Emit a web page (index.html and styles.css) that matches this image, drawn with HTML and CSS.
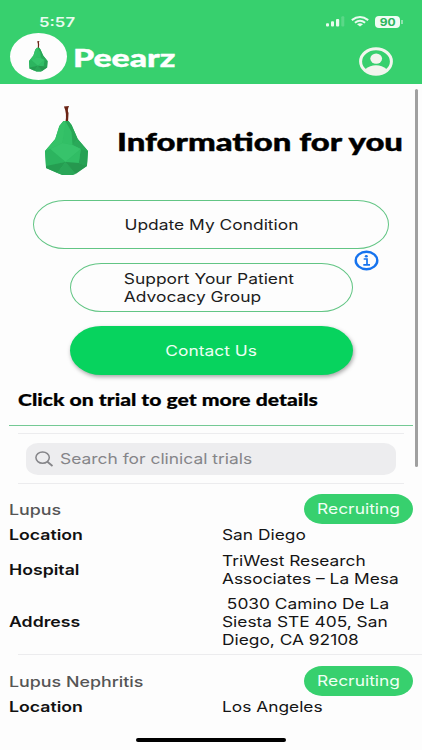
FILE: index.html
```html
<!DOCTYPE html>
<html lang="en">
<head>
<meta charset="utf-8">
<title>Peearz</title>
<link rel="stylesheet" href="styles.css">
</head>
<body>
<svg width="0" height="0" class="defs" aria-hidden="true">
  <symbol id="pear" viewBox="0 0 43 70" preserveAspectRatio="none">
    <path d="M18.5 0.5 L23.5 0 Q21.5 4 23 7 L22.5 16 L20 16 Q21.5 7 18.5 0.5Z" fill="#6b2415"/>
    <path d="M18 15 L23 15 L26 19 L32 33 L42 45 L41 60 L27 69 L17 69 L1 62 L0 45 L10 33 L14 20Z" fill="#2fb861"/>
    <path d="M20 15 L18 15 L14 20 L10 33 L0 45 L5 43 L17 37 L20 24Z" fill="#35c268"/>
    <path d="M20 15 L17 37 L27 39 L26 26Z" fill="#32bf66"/>
    <path d="M20 15 L23 15 L26 19 L32 33 L27 39 L26 26Z" fill="#27a655"/>
    <path d="M32 33 L42 45 L35 43 L27 39Z" fill="#2aa959"/>
    <path d="M17 37 L27 39 L35 43 L20 56 L5 43Z" fill="#37c36b"/>
    <path d="M0 45 L5 43 L20 56 L1 60Z" fill="#2cb45f"/>
    <path d="M35 43 L42 45 L41 60 L33 57Z" fill="#27a154"/>
    <path d="M35 43 L33 57 L20 56Z" fill="#31bd65"/>
    <path d="M1 60 L20 56 L12 67 L1 62Z" fill="#259d51"/>
    <path d="M20 56 L30 68 L27 69 L17 69 L12 67Z" fill="#2aa658"/>
    <path d="M20 56 L33 57 L41 60 L30 68Z" fill="#26984f"/>
  </symbol>
</svg>
<div class="screen">
  <header class="header">
    <div class="status">
      <span class="wide clock">5:57</span>
      <div class="status-icons">
        <svg class="signal" width="19" height="11" viewBox="0 0 19 11" fill="#e9fbef"><rect y="7.2" width="3" height="3.3" rx="1"/><rect x="5" y="5.3" width="3" height="5.2" rx="1"/><rect x="10" y="3" width="3.2" height="7.5" rx="1"/><rect x="15.3" y="0.3" width="3" height="10.2" rx="1" opacity=".2"/></svg>
        <svg class="wifi" width="18" height="11" viewBox="0 0 18 11" fill="none" stroke="#e9fbef" stroke-width="2"><path d="M.8 4.1Q9-2 17.2 4.1"/><path d="M3.9 6.7Q9 2.8 14.1 6.7"/><path d="M9 10.6 6 8.3Q9 6.2 12 8.3Z" fill="#e9fbef" stroke="none"/></svg>
        <span class="battery"><span class="wide">90</span></span><i class="battery-tip"></i>
      </div>
    </div>
    <div class="brand">
      <div class="logo"><svg width="19" height="31"><use href="#pear"/></svg></div>
      <span class="wide brand-name">Peearz</span>
      <svg class="profile" width="34" height="29" viewBox="0 0 34 29"><ellipse cx="17" cy="14.5" rx="15.4" ry="12.7" fill="none" stroke="#f2f5ee" stroke-width="3"/><ellipse cx="17.2" cy="11.6" rx="5.9" ry="5.2" fill="#f2f5ee"/><path d="M6.2 22.2Q11 18.2 17 18.2T27.8 22.2Q23 27 17 27T6.2 22.2Z" fill="#f2f5ee"/></svg>
    </div>
  </header>
  <main class="content">
    <div class="hero">
      <svg width="44" height="70"><use href="#pear"/></svg>
      <h1 class="wide hero-title">Information for you</h1>
    </div>
    <div class="actions">
      <button class="btn btn-large"><span class="wide">Update My Condition</span></button>
      <div class="support">
        <button class="btn"><span class="wide support-text">Support Your Patient<br>Advocacy Group</span></button>
        <svg class="info" width="25" height="21" viewBox="0 0 25 21"><ellipse cx="12.5" cy="10.5" rx="10.8" ry="8.7" fill="none" stroke="#1673ee" stroke-width="2.4"/><ellipse cx="12.3" cy="6.3" rx="1.5" ry="1.2" fill="#1673ee"/><path d="M9.7 9H13V14.8M9.3 14.8H16" fill="none" stroke="#1673ee" stroke-width="1.7"/></svg>
      </div>
      <button class="btn btn-primary"><span class="wide">Contact Us</span></button>
    </div>
    <h2 class="section-title"><span class="wide">Click on trial to get more details</span></h2>
    <div class="search-row">
      <div class="search">
        <svg width="19" height="16" viewBox="0 0 19 16" fill="none" stroke="#858589" stroke-width="1.5"><ellipse cx="7.6" cy="6.6" rx="6.7" ry="5.7"/><path d="M12.4 10.8 17.5 15" stroke-width="1.8"/></svg>
        <span class="wide">Search for clinical trials</span>
      </div>
    </div>
    <section class="trial">
      <div class="trial-head"><span class="wide condition">Lupus</span><span class="pill"><span class="wide">Recruiting</span></span></div>
      <dl>
        <dt><span class="wide">Location</span></dt><dd><span class="wide">San Diego</span></dd>
        <dt><span class="wide">Hospital</span></dt><dd><span class="wide">TriWest Research<br>Associates – La Mesa</span></dd>
        <dt><span class="wide">Address</span></dt><dd><span class="wide">&nbsp;5030 Camino De La<br>Siesta STE 405, San<br>Diego, CA 92108</span></dd>
      </dl>
    </section>
    <section class="trial">
      <div class="trial-head"><span class="wide condition">Lupus Nephritis</span><span class="pill"><span class="wide">Recruiting</span></span></div>
      <dl>
        <dt><span class="wide">Location</span></dt><dd><span class="wide">Los Angeles</span></dd>
      </dl>
    </section>
  </main>
  <div class="scrollbar"></div>
  <div class="home-bar"></div>
</div>
</body>
</html>
```
FILE: styles.css
```css
* { box-sizing: border-box; }
body { margin: 0; background: #fdfdfd; font: 14.5px/18px Inter, sans-serif; color: #151515; }
.defs { position: absolute; }
.screen { position: relative; width: 422px; height: 750px; overflow: hidden; }
.wide { display: inline-block; white-space: nowrap; transform: scaleX(1.2); transform-origin: left center; }

.header { height: 84px; background: #37d06e; color: #fff; }
.status { display: flex; justify-content: space-between; height: 33px; padding: 13px 19px 0 39px; }
.clock { font-weight: 600; font-size: 13.5px; color: #e9fbef; transform: scaleX(1.24); }
.status-icons { display: flex; align-items: flex-start; padding-top: 3px; }
.wifi { margin-left: 6px; }
.battery { display: flex; justify-content: center; align-items: center; width: 25px; height: 12px; margin-left: 6px; border-radius: 4px; background: #f0fcf4; color: #2bb55d; font-weight: 700; font-size: 10px; line-height: 12px; }
.battery .wide { transform-origin: center; }
.battery-tip { width: 2px; height: 4px; margin: 4px 0 0 1px; background: #8fe3ae; }
.brand { display: flex; padding-left: 10px; }
.logo { display: flex; justify-content: center; align-items: center; width: 57px; height: 47px; border-radius: 50%; background: #fdfdfd; }
.brand-name { margin: 10px 0 0 6px; font: 900 24px/29px Lato, sans-serif; -webkit-text-stroke: .4px #fff; transform: scaleX(1.41); }
.profile { margin: 14px 29px 0 auto; }

.hero { display: flex; height: 116px; padding: 22px 0 0 45px; }
.hero-title { margin: 21px 0 0 28px; font: 900 24px/30px Lato, sans-serif; color: #000; -webkit-text-stroke: .4px #000; transform: scaleX(1.37); }

.actions { display: flex; flex-direction: column; align-items: center; gap: 14px; }
.btn { display: flex; justify-content: center; align-items: center; width: 283px; height: 49px; padding: 0; border: 1px solid #62c584; border-radius: 32px / 25px; background: #fdfdfd; color: #1c1c1c; font: inherit; text-align: left; }
.btn .wide { transform-origin: center; }
.btn-large { width: 356px; }
.support { position: relative; }
.support-text { margin-left: -5px; }
.info { position: absolute; left: 284px; top: -13px; }
.btn-primary { border: 0; background: #07d35e; color: #edfff4; box-shadow: 1px 2px 4px rgba(0, 0, 0, .35); }

.section-title { height: 51px; margin: 0 9px 7px; padding: 15px 0 0 9px; border-bottom: 1px solid #74c994; font: 900 16px/20px Lato, sans-serif; color: #000; }
.section-title .wide { transform: scaleX(1.32); -webkit-text-stroke: .2px #000; }
.search-row { height: 51px; margin: 0 18px; padding: 9px 8px; border: solid #ececee; border-width: 1px 0; }
.search { display: flex; align-items: center; gap: 6px; height: 32px; padding-left: 9px; border-radius: 12px / 10px; background: #ededef; color: #858589; }

.trial { padding: 10px 9px 0; }
.trial + .trial { margin: 5px 0 0 18px; padding: 11px 9px 0 0; border-top: 1px solid #ececee; }
.trial + .trial .trial-head, .trial + .trial dl { margin-left: -9px; }
.trial-head { display: flex; justify-content: space-between; height: 30px; }
.condition { margin-top: 6.5px; font-weight: 500; color: #555; transform: scaleX(1.23); }
.pill { display: flex; justify-content: center; align-items: center; width: 109px; height: 30px; border-radius: 18px / 15px; background: #37d06e; color: #effff4; }
.pill .wide { transform-origin: center; }
dl { display: grid; grid-template-columns: 213px 1fr; row-gap: 7.5px; align-items: center; margin: 2px 0 0; }
dt { font-weight: 600; color: #111; }
dt .wide { transform: scaleX(1.22); }
dd { margin: 0; }
dd .wide { transform: scaleX(1.195); }

.scrollbar { position: absolute; left: 415px; top: 89px; width: 3px; height: 378px; border-radius: 2px; background: #a0a0a0; }
.home-bar { position: absolute; left: 136px; top: 738px; width: 150px; height: 4px; border-radius: 2px; background: #000; }
```
